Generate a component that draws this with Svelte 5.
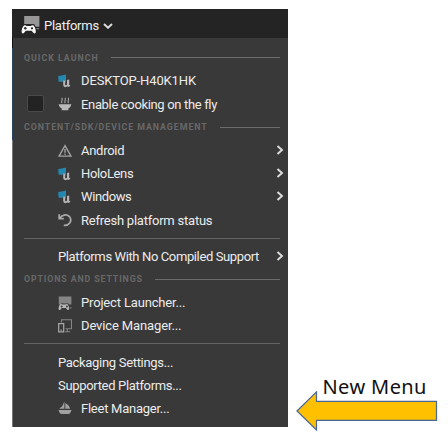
<script>
  const groups = [
    { title: 'QUICK LAUNCH', ls: 1, rows: [
      { icon: 'win', label: 'DESKTOP-H40K1HK', ls: -0.13 },
      { icon: 'cook', label: 'Enable cooking on the fly', check: true, ls: -0.34 }
    ] },
    { title: 'CONTENT/SDK/DEVICE MANAGEMENT', ls: 0.96, rows: [
      { icon: 'warn', label: 'Android', sub: true, ls: -0.28 },
      { icon: 'win', label: 'HoloLens', sub: true, ls: -0.34 },
      { icon: 'win', label: 'Windows', sub: true, ls: -0.38 },
      { icon: 'refresh', label: 'Refresh platform status', ls: -0.23 },
      { sep: true },
      { label: 'Platforms With No Compiled Support', sub: true, ls: -0.38 }
    ] },
    { title: 'OPTIONS AND SETTINGS', ls: 0.88, rows: [
      { icon: 'launcher', label: 'Project Launcher...', ls: -0.16 },
      { icon: 'device', label: 'Device Manager...', ls: -0.13 },
      { sep: true },
      { label: 'Packaging Settings...', ls: -0.31 },
      { label: 'Supported Platforms...', ls: -0.33 },
      { icon: 'fleet', label: 'Fleet Manager...', ls: -0.25 }
    ] }
  ];
</script>

{#snippet pad()}
  <path d="M4.2 9.2C5 8.7 6 8.8 6.7 9.5H10.3C11 8.8 12 8.7 12.8 9.2C14 10.2 15 13 14.8 15C14.6 16.6 13.3 16.6 12.4 15.4L11.1 13.8H5.9L4.6 15.4C3.7 16.6 2.4 16.6 2.2 15C2 13 3 10.2 4.2 9.2Z" />
{/snippet}

{#snippet icon(name)}
  <svg class="icon" viewBox="0 0 14 14">
    {#if name === 'win'}
      <path d="M.3 1.9L3.7 1.4V5H.3ZM3.7 1.4L8 .6V5H3.7ZM.5 5H3.7V8.1L.5 7.6ZM3.7 5H8V8.8L3.7 8.2Z" fill="#2588b0" />
      <path d="M5.8 7V10.4Q5.8 12 7.5 12Q9 12 9.5 10.8M9.8 6.5V11.2Q10 12.2 11.9 11.9" fill="none" stroke="#393939" stroke-width="2.8" />
      <path d="M5 6.5L7.1 6.8V10.2Q7.1 11.3 7.8 11.3Q8.5 11.3 9 10.6V6L11.2 5.4V10.8Q11.4 11.5 12.6 11.2Q11.7 13 10.2 13Q9.6 12.9 9.3 12.2Q8.5 13.2 7.2 13.2Q5.2 13 5.2 10.8V7.4Z" fill="#b5b5b5" />
    {:else if name === 'cook'}
      <path d="M.6 7.3H13.4Q13 10.2 10.4 11.5V13.2H3.7V11.5Q1 10.2 .6 7.3Z" fill="#bababa" />
      <path d="M4 6.2C2.6 4.7 5.1 3 3.9 .8M7.2 6.2C5.8 4.7 8.3 3 7.1 .8M10.4 6.2C9 4.7 11.5 3 10.3 .8" fill="none" stroke="#a5a5a5" stroke-width="1.1" />
    {:else if name === 'warn'}
      <path d="M7 1.6L13 12.1H1Z" fill="none" stroke="#a2a2a2" stroke-width="1.4" />
      <path d="M7 5V8.7M7 9.5V10.8" stroke="#a2a2a2" stroke-width="1.4" />
    {:else if name === 'refresh'}
      <path d="M1.2 1.2V5.6H5.8M1.5 5.3C4.4 1.3 9.6 .8 11.8 4.1C14.4 8.3 11 12.9 5.8 12.3" fill="none" stroke="#a8a8a8" stroke-width="1.8" />
    {:else if name === 'launcher'}
      <path d="M.8 .6H13.4V8.6H11.2Q9.6 6.8 8.5 7.6H5.3Q3.8 6.5 2.4 8.4H.8ZM11.8 11.3H13.4V12.5H12Z" fill="#858585" />
      <g fill="#b8b8b8" transform="translate(-1.2 .6) scale(.83)">{@render pad()}</g>
      <circle cx="3.6" cy="10.4" r="1" fill="#393939" /><circle cx="8.9" cy="10.4" r="1" fill="#393939" />
    {:else if name === 'device'}
      <path d="M3.5 3.6V.8H13.5V9.7H7.5M7 12.8H12.3M9.3 10V12.8" fill="none" stroke="#858585" stroke-width="1.1" />
      <rect x=".7" y="4.6" width="5" height="8.3" fill="none" stroke="#aaa" stroke-width="1.2" />
      <path d="M2.4 11.2H4.2" stroke="#aaa" />
    {:else if name === 'fleet'}
      <path d="M6.4 .5V7.8H1.2Q5 5.4 6.4 .5ZM7.3 2.1Q11.4 4.2 12.1 7.8H7.3ZM.5 8.9H13.5Q13 11.7 11.2 12.9H2.8Q.9 11.6 .5 8.9Z" fill="#a0a0a0" />
    {/if}
  </svg>
{/snippet}

<main>
  <section class="panel">
    <header>
      <svg class="logo" viewBox="0 0 20 20">
        <path d="M3.2 1H18.4V11.7H14.8L13 9H3.2ZM15.3 13.2H18.2V14.3H15.6Z" fill="#979797" />
        <g transform="translate(-1.8 .3) scale(1.12)" fill="#f7f7f7" stroke="#242424" stroke-width=".8" paint-order="stroke">{@render pad()}</g>
        <circle cx="4.3" cy="13.3" r="1.2" fill="#242424" /><circle cx="11" cy="13.3" r="1.1" fill="#242424" />
      </svg>
      <span>Platforms</span>
      <svg class="down" viewBox="0 0 10 6"><path d="M1 1L5 4.8L9 1" /></svg>
    </header>
    <div class="menu">
      {#each groups as g}
        <div class="title"><span style:letter-spacing="{g.ls}px">{g.title}</span><i></i></div>
        {#each g.rows as r}
          {#if r.sep}
            <div class="sep"><i></i></div>
          {:else}
            <div class="row">
              <div class="gutter">{#if r.check}<b></b>{/if}</div>
              {#if r.icon}{@render icon(r.icon)}{/if}
              <span class="label" style:letter-spacing="{r.ls}px">{r.label}</span>
              {#if r.sub}<svg class="chev" viewBox="0 0 8 10"><path d="M1.5 1L6 5L1.5 9" /></svg>{/if}
            </div>
          {/if}
        {/each}
      {/each}
    </div>
  </section>
  <aside>
    <p>New Menu</p>
    <svg class="arrow" viewBox="0 0 142 40"><path d="M1 20L20.5 .9V10.4H140.5V29.4H20.5V39Z" /></svg>
  </aside>
</main>

<style>
  :global(body) { background: #fff; }
  main { box-sizing: border-box; width: 448px; height: 436px; padding: 9px 0 0 12px; display: flex; overflow: hidden; font-family: Roboto, sans-serif; }
  .panel { width: 276px; height: 418px; flex: none; background: #393939; }
  header { height: 29px; box-sizing: border-box; padding: 3px 0 0 9px; background: #242424; display: flex; align-items: center; color: #eee; font-size: 13px; }
  header span { margin-left: 3px; letter-spacing: -.25px; }
  .logo { width: 20px; height: 20px; }
  .down { width: 10px; height: 6px; margin: 1px 0 0 4px; }
  .down path, .chev path { fill: none; stroke: #ddd; stroke-width: 1.9; }
  .menu { height: 389px; box-sizing: border-box; padding: 8.2px 4px 0 11px; border-left: 1px solid; border-image: linear-gradient(#111 11px, #29435d 11px, #29435d 102px, #777 102px) 1; }
  .title { height: 23.2px; display: flex; align-items: center; font-size: 8.8px; font-weight: 700; color: #686868; white-space: nowrap; }
  .title i { flex: 1; height: 1px; background: #6c6c6c; margin: 0 4px 0 12px; }
  .row { height: 23.2px; display: flex; align-items: center; color: #ececec; font-size: 13px; white-space: nowrap; }
  .gutter { width: 34px; flex: none; }
  .gutter b { display: block; width: 15px; height: 15px; margin: -1px 0 0 3px; background: #232323; border: 1px solid #4a4a4a; border-radius: 2px; }
  .icon { width: 14px; height: 14px; margin-right: 9px; flex: none; }
  .chev { width: 8px; height: 10px; margin: -1px 0 0 auto; }
  .sep { height: 13px; display: flex; align-items: center; }
  .sep i { flex: 1; height: 1px; margin: 0 4px 0 0; background: #646464; }
  aside { padding: 365px 0 0 8px; flex: none; }
  p { margin: 0 0 0 26.5px; height: 17px; font: 20px/25px "Noto Sans", sans-serif; letter-spacing: .4px; color: #111; white-space: nowrap; }
  .arrow { width: 142px; height: 40px; display: block; }
  .arrow path { fill: #ffc000; stroke: #4a6694; stroke-width: 1.2; }
</style>
